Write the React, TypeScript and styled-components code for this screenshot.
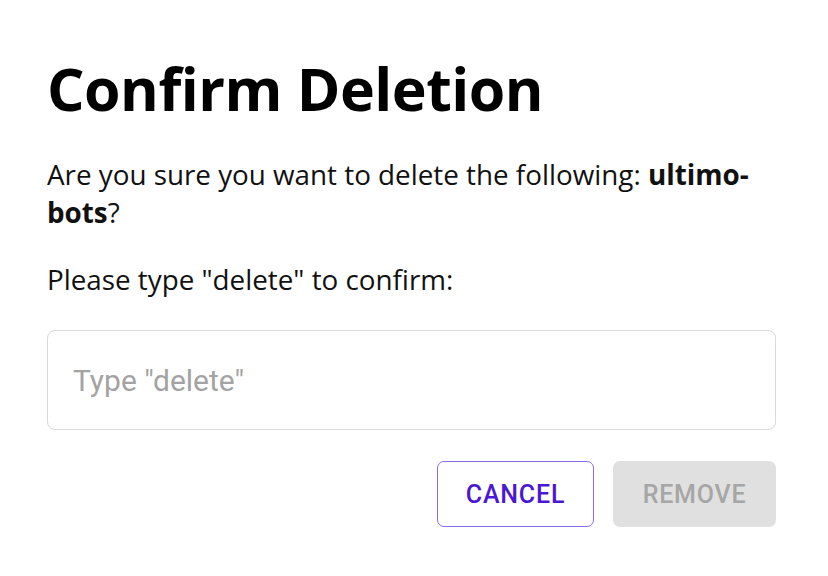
import React from "react";
import styled, { createGlobalStyle } from "styled-components";

const Global = createGlobalStyle`
  html, body { margin: 0; padding: 0; background: #ffffff; }
  * { box-sizing: border-box; }
`;

const Dialog = styled.div`
  width: 828px;
  height: 576px;
  background: #ffffff;
  padding: 50px 52px 0 47px;
  display: flex;
  flex-direction: column;
  font-family: "Open Sans", "Noto Sans", sans-serif;
  color: #111111;
`;

const Title = styled.h1`
  margin: 0;
  font-family: "Open Sans", sans-serif;
  font-weight: 700;
  font-size: 59px;
  line-height: 76px;
  color: #000000;
  letter-spacing: -0.5px;
`;

const Text = styled.p<{ $gap: number }>`
  margin: ${(p) => p.$gap}px 0 0;
  font-size: 27.8px;
  line-height: 38px;
  letter-spacing: 0;
`;

const Strong = styled.strong`
  font-weight: 700;
`;

const Input = styled.input`
  margin-top: 32px;
  width: 100%;
  height: 100px;
  border: 1px solid #d9d9d9;
  border-radius: 8px;
  padding: 0 25px;
  font-family: Roboto, sans-serif;
  font-size: 30px;
  color: #222;
  outline: none;
  &::placeholder { color: #a3a3a3; }
`;

const Actions = styled.div`
  margin-top: 31px;
  display: flex;
  justify-content: flex-end;
  gap: 19px;
`;

const Button = styled.button<{ $variant: "outlined" | "disabled"; $w: number }>`
  width: ${(p) => p.$w}px;
  height: 66px;
  padding: 0;
  border-radius: 7px;
  font-family: Roboto, sans-serif;
  font-weight: 500;
  font-size: 25px;
  letter-spacing: 0.8px;
  text-transform: uppercase;
  border: 1px solid ${(p) => (p.$variant === "outlined" ? "#8a6ae8" : "transparent")};
  background: ${(p) => (p.$variant === "outlined" ? "#ffffff" : "#e0e0e0")};
  color: ${(p) => (p.$variant === "outlined" ? "#4a17d4" : "#a6a6a6")};
  cursor: ${(p) => (p.$variant === "outlined" ? "pointer" : "default")};
`;

export default function App() {
  return (
    <>
      <Global />
      <Dialog>
        <Title>Confirm Deletion</Title>
        <Text $gap={29}>
          Are you sure you want to delete the following: <Strong>ultimo-bots</Strong>?
        </Text>
        <Text $gap={29}>Please type "delete" to confirm:</Text>
        <Input placeholder={'Type "delete"'} />
        <Actions>
          <Button $variant="outlined" $w={157}>Cancel</Button>
          <Button $variant="disabled" $w={163} disabled>Remove</Button>
        </Actions>
      </Dialog>
    </>
  );
}
